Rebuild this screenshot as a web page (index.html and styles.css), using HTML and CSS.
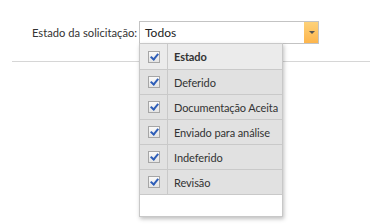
FILE: index.html
```html
<!DOCTYPE html>
<html lang="pt">
<head>
    <meta charset="UTF-8">
    <title>Filtro</title>
    <link rel="stylesheet" href="styles.css">
</head>
<body>
    <div class="filter">
        <span class="label">Estado da solicitação:</span>
        <div class="combo">
            <div class="select">
                <span class="value">Todos</span>
                <span class="arrow"></span>
            </div>
            <div class="dropdown">
                <div class="row head"><span class="cell-check"><span class="check"></span></span><span class="cell-text">Estado</span></div>
                <div class="row"><span class="cell-check"><span class="check"></span></span><span class="cell-text">Deferido</span></div>
                <div class="row"><span class="cell-check"><span class="check"></span></span><span class="cell-text">Documentação Aceita</span></div>
                <div class="row"><span class="cell-check"><span class="check"></span></span><span class="cell-text">Enviado para análise</span></div>
                <div class="row"><span class="cell-check"><span class="check"></span></span><span class="cell-text">Indeferido</span></div>
                <div class="row"><span class="cell-check"><span class="check"></span></span><span class="cell-text">Revisão</span></div>
            </div>
        </div>
    </div>
    <div class="divider"></div>
</body>
</html>
```
FILE: styles.css
```css
body{
    margin: 0;
    min-height: 224px;
    background-color: white;
    font-family: Lato, "Open Sans", sans-serif;
    font-size: 11px;
    color: #333;
}
.filter{
    display: flex;
    align-items: center;
    padding-top: 21px;
    padding-left: 32px;
}
.label{
    width: 107px;
    white-space: nowrap;
    font-size: 11.2px;
}
.combo{
    position: relative;
}
.select{
    width: 178px;
    height: 21px;
    border: 1px solid #c3c3c3;
    display: flex;
    align-items: center;
    background-color: white;
}
.value{
    flex: 1;
    padding-left: 5px;
    font-size: 12px;
    color: #222;
}
.arrow{
    width: 14px;
    height: 21px;
    background: linear-gradient(#fdd27a, #fdb54c);
    position: relative;
}
.arrow::after{
    content: "";
    position: absolute;
    left: 5px;
    top: 9px;
    border-left: 3px solid transparent;
    border-right: 3px solid transparent;
    border-top: 3px solid #555;
}
.divider{
    margin-top: 17px;
    margin-left: 12px;
    border-top: 1px solid #d6d6d6;
}
.dropdown{
    position: absolute;
    left: 0;
    top: 22px;
    width: 142px;
    height: 172px;
    border: 1px solid #c8c8c8;
    background-color: white;
    box-shadow: 1px 2px 4px rgba(0,0,0,0.25);
    z-index: 10;
}
.row{
    display: flex;
    height: 24px;
    border-bottom: 1px solid #c9c9c9;
    background-color: #e1e1e1;
}
.row.head{
    height: 25px;
    background-color: #ebebeb;
    font-weight: bold;
}
.cell-check{
    flex-shrink: 0;
    width: 27px;
    border-right: 1px solid #c9c9c9;
    display: flex;
    align-items: center;
    justify-content: center;
}
.cell-text{
    flex: 1;
    display: flex;
    align-items: center;
    padding-left: 6px;
    white-space: nowrap;
    overflow: hidden;
    letter-spacing: -0.1px;
}
.check{
    width: 10px;
    height: 10px;
    border: 1px solid #a6a6a6;
    background: linear-gradient(#fafafa, #e4e4e4);
    position: relative;
}
.check::after{
    content: "";
    position: absolute;
    left: 3px;
    top: 0px;
    width: 3px;
    height: 6px;
    border-right: 2px solid #2e5eb8;
    border-bottom: 2px solid #2e5eb8;
    transform: rotate(40deg);
}
```
